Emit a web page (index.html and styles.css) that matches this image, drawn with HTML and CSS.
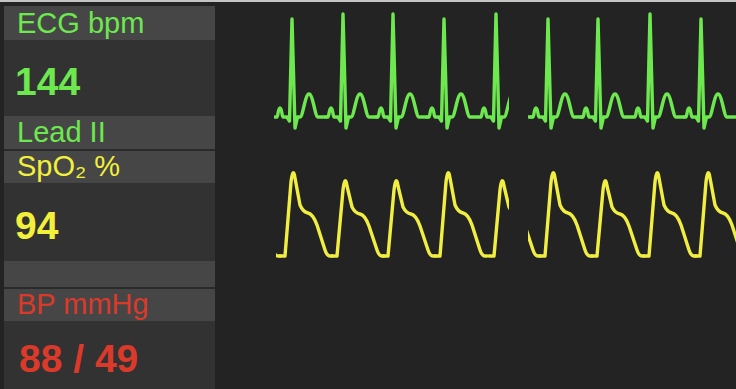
FILE: index.html
```html
<!DOCTYPE html>
<html lang="en">
<head>
<meta charset="utf-8">
<title>Monitor</title>
<link rel="stylesheet" href="styles.css">
</head>
<body>
<div class="monitor">
  <div class="panel">
    <div class="group">
      <div class="hdr ecg h34">ECG bpm</div>
      <div class="val ecg v76">144</div>
      <div class="hdr ecg h33">Lead II</div>
    </div>
    <div class="group">
      <div class="hdr spo2 h32">SpO₂ %</div>
      <div class="val spo2 v78">94</div>
      <div class="hdr h26"></div>
    </div>
    <div class="group">
      <div class="hdr bp h32">BP mmHg</div>
      <div class="val bp v68">88 / 49</div>
    </div>
  </div>
  <div class="traces">
    <svg class="trace t-ecg" width="521" height="140" viewBox="215 2 521 140">
      <defs>
        <path id="ecgHi" d="M-17,117 L-15,117 C-14,117 -14,108 -12,108 C-10,108 -10,117 -9,117 L-5,117 L-2.5,121 L0,14 L3,128 L5.5,117 L8,117 C11,117 13,94 17,94 C21,94 23,117 26,117 L34,117"/>
        <path id="ecgLo" d="M-17,117 L-15,117 C-14,117 -14,108 -12,108 C-10,108 -10,117 -9,117 L-5,117 L-2.5,121 L0,19 L3,128 L5.5,117 L8,117 C11,117 13,94 17,94 C21,94 23,117 26,117 L34,117"/>
        <clipPath id="e1"><rect x="274" y="0" width="235" height="140"/></clipPath>
        <clipPath id="e2"><rect x="528" y="0" width="210" height="140"/></clipPath>
      </defs>
      <g clip-path="url(#e1)">
        <use href="#ecgLo" x="292"/>
        <use href="#ecgHi" x="343"/>
        <use href="#ecgHi" x="393"/>
        <use href="#ecgLo" x="444"/>
        <use href="#ecgHi" x="496"/>
      </g>
      <g clip-path="url(#e2)">
        <use href="#ecgHi" x="497"/>
        <use href="#ecgLo" x="548"/>
        <use href="#ecgLo" x="598"/>
        <use href="#ecgHi" x="650"/>
        <use href="#ecgLo" x="701"/>
      </g>
    </svg>
    <svg class="trace t-spo2" width="521" height="130" viewBox="215 142 521 130">
      <defs>
        <path id="plHi" d="M-13,256 L-8,256 L-2,182 Q0,166 2,178 L7,205 Q10,212 15,213 Q20,214 24,225 L32,250 Q34,256 37,256 L39,256"/>
        <path id="plLo" d="M-13,256 L-8,256 L-2,190 Q0,174 2,186 L7,207 Q10,213 15,214 Q20,215 24,226 L32,250 Q34,256 37,256 L39,256"/>
        <clipPath id="p1"><rect x="276" y="142" width="233" height="130"/></clipPath>
        <clipPath id="p2"><rect x="528" y="142" width="210" height="130"/></clipPath>
      </defs>
      <g clip-path="url(#p1)">
        <use href="#plHi" x="241"/>
        <use href="#plHi" x="293"/>
        <use href="#plLo" x="345"/>
        <use href="#plLo" x="396"/>
        <use href="#plHi" x="448"/>
        <use href="#plLo" x="502"/>
      </g>
      <g clip-path="url(#p2)">
        <use href="#plLo" x="501"/>
        <use href="#plHi" x="553"/>
        <use href="#plLo" x="605"/>
        <use href="#plHi" x="657"/>
        <use href="#plHi" x="708"/>
      </g>
    </svg>
  </div>
</div>
</body>
</html>
```
FILE: styles.css
```css
html, body {margin: 0; padding: 0;}
body {background-color: #232323; border-top: 2px solid #c4c4c4; overflow: hidden; font-family: "Liberation Sans", Arial, sans-serif;}
.monitor {display: flex; height: 387px; overflow: hidden;}
.panel {width: 211px; margin: 4px 0 0 4px; display: flex; flex-direction: column; gap: 2px; background-color: #2a2a2a; flex: none;}
.group {display: flex; flex-direction: column;}
.hdr {background-color: #464646; font-size: 29px; padding-left: 13px; white-space: nowrap;}
.val {background-color: #323232; font-size: 39px; font-weight: bold; padding: 8px 0 0 11px; display: flex; align-items: center; box-sizing: border-box;}
.h34 {height: 34px; line-height: 34px;}
.h33 {height: 33px; line-height: 33px;}
.h32 {height: 32px; line-height: 31px;}
.h26 {height: 26px;}
.v76 {height: 76px;}
.v78 {height: 78px;}
.v68 {height: 68px; padding-left: 15px;}
.ecg {color: #6ee84f;}
.spo2 {color: #f2f03a;}
.bp {color: #db3a2a;}
.traces {flex: 1; display: flex; flex-direction: column;}
.trace {display: block; fill: none; stroke-width: 3.4; stroke-linecap: round; stroke-linejoin: round;}
.t-ecg {stroke: #6ee84f;}
.t-spo2 {stroke: #f0ee40;}
```
